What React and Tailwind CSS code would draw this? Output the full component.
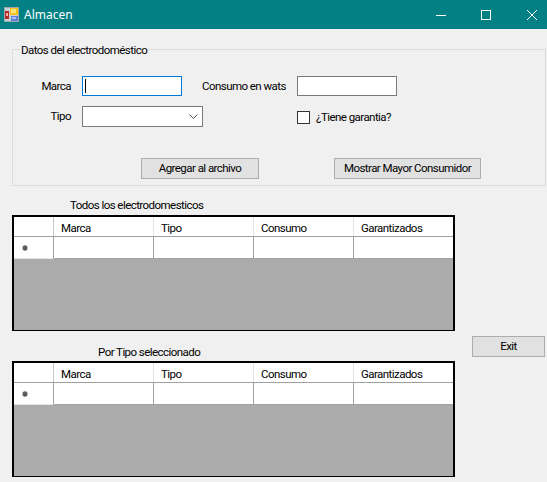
const columns = ['Marca', 'Tipo', 'Consumo', 'Garantizados'];

const AppIcon = () => (
	<svg width="15" height="15" viewBox="0 0 15 15" className="ml-[4px] shrink-0">
		<rect x="0.5" y="0.5" width="14" height="14" fill="#c9d3d6" stroke="#9aa7ab" />
		<rect x="1" y="4" width="4" height="8" fill="#b5272b" />
		<rect x="2" y="6" width="2" height="3" fill="#f0b0a0" />
		<rect x="6" y="1" width="8" height="7" fill="#f5c21b" />
		<rect x="7" y="2" width="5" height="4" fill="#fbe27a" />
		<rect x="7" y="9" width="7" height="5" fill="#5f82d8" />
		<rect x="8" y="10" width="4" height="2" fill="#a9bdf0" />
	</svg>
);

const Grid = () => (
	<div className="w-[443px] h-[116px] border-2 border-b border-black bg-[#ababab]">
		<div className="flex h-[20px] bg-white border-b border-[#a0a0a0]">
			<div className="w-[40px] border-r border-[#c8c8c8]" />
			{columns.map((col, i) => (
				<div
					key={col}
					className={`${i < 3 ? 'w-[100px] border-r border-[#e4e4e4]' : 'w-[99px]'} pl-[7px] pt-[1px] leading-[20px]`}
				>
					{col}
				</div>
			))}
		</div>
		<div className="flex h-[22px]">
			<div className="w-[40px] flex items-center pl-[8px] bg-white border-r border-b border-r-[#a0a0a0] border-b-[#e4e4e4]">
				<svg width="6" height="6" viewBox="0 0 6 6" className="mt-[1px]">
					<path d="M3 0v6M0 3h6M1 1l4 4M5 1L1 5" stroke="#555" strokeWidth="1.2" />
				</svg>
			</div>
			{columns.map((col, i) => (
				<div
					key={col}
					className={`${i < 3 ? 'w-[100px] border-r border-[#a0a0a0]' : 'w-[99px]'} bg-white border-b border-[#a0a0a0]`}
				/>
			))}
		</div>
	</div>
);

const Button = ({ className, children }) => (
	<button
		type="button"
		className={`h-[21px] whitespace-nowrap bg-[#e1e1e1] border border-[#adadad] leading-none text-black ${className}`}
	>
		{children}
	</button>
);

const App = () => {
	return (
		<div className="w-[547px] h-[482px] overflow-hidden bg-[#f0f0f0] text-[11.5px] tracking-[-0.55px] text-black font-['Roboto','Liberation_Sans',sans-serif]">
			{/* title bar */}
			<div className="flex items-center h-[29px] bg-[#038083] text-white">
				<AppIcon />
				<span className="ml-[5px] text-[12px] tracking-normal font-['Noto_Sans',sans-serif]">Almacen</span>
				<div className="ml-auto flex items-center gap-[35px] pr-[10px]">
					<svg width="10" height="10" viewBox="0 0 10 10" fill="none" stroke="white">
						<path d="M0 5.5h10" />
					</svg>
					<svg width="10" height="10" viewBox="0 0 10 10" fill="none" stroke="white">
						<rect x="0.5" y="0.5" width="9" height="9" />
					</svg>
					<svg width="10" height="10" viewBox="0 0 10 10" fill="none" stroke="white" className="ml-[1px]">
						<path d="M0 0l10 10M10 0L0 10" />
					</svg>
				</div>
			</div>

			<div className="pl-[12px]">
				{/* group box */}
				<fieldset className="mt-[13px] w-[534px] h-[144px] border border-[#dcdcdc]">
					<legend className="ml-[7px] px-[1px] leading-[14px] translate-y-[1px]">Datos del electrodoméstico</legend>
					<div className="flex items-center mt-[20px]">
						<span className="w-[58px] mt-[1px] text-right">Marca</span>
						<div className="ml-[11px] w-[100px] h-[20px] bg-white border border-[#0078d7] flex items-center pl-[2px]">
							<div className="w-[1px] h-[14px] bg-black" />
						</div>
						<span className="ml-[20px] mt-[1px] w-[85px] whitespace-nowrap">Consumo en wats</span>
						<div className="ml-[10px] w-[100px] h-[20px] bg-white border border-[#7a7a7a]" />
					</div>
					<div className="flex items-center mt-[10px]">
						<span className="w-[58px] text-right">Tipo</span>
						<div className="ml-[11px] w-[121px] h-[21px] bg-white border border-[#7a7a7a] flex items-center justify-end pr-[4px]">
							<svg width="9" height="5" viewBox="0 0 9 5" fill="none" stroke="#555">
								<path d="M0.5 0.5L4.5 4.5l4-4" />
							</svg>
						</div>
						<div className="ml-[94px] w-[13px] h-[13px] mt-[2px] bg-white border border-[#333]" />
						<span className="ml-[6px] mt-[3px]">¿Tiene garantia?</span>
					</div>
					<div className="flex mt-[31px]">
						<Button className="ml-[128px] w-[118px]">Agregar al archivo</Button>
						<Button className="ml-[75px] w-[147px]">Mostrar Mayor Consumidor</Button>
					</div>
				</fieldset>

				{/* grids */}
				<div className="flex">
					<div className="w-[443px]">
						<div className="pl-[58px] mt-[13px] h-[16px] leading-[13px]">Todos los electrodomesticos</div>
						<Grid />
						<div className="pl-[86px] mt-[15px] h-[15px] leading-[13px]">Por Tipo seleccionado</div>
						<Grid />
					</div>
					<Button className="ml-[17px] mt-[150px] w-[73px]">Exit</Button>
				</div>
			</div>
		</div>
	);
};

export default App;
